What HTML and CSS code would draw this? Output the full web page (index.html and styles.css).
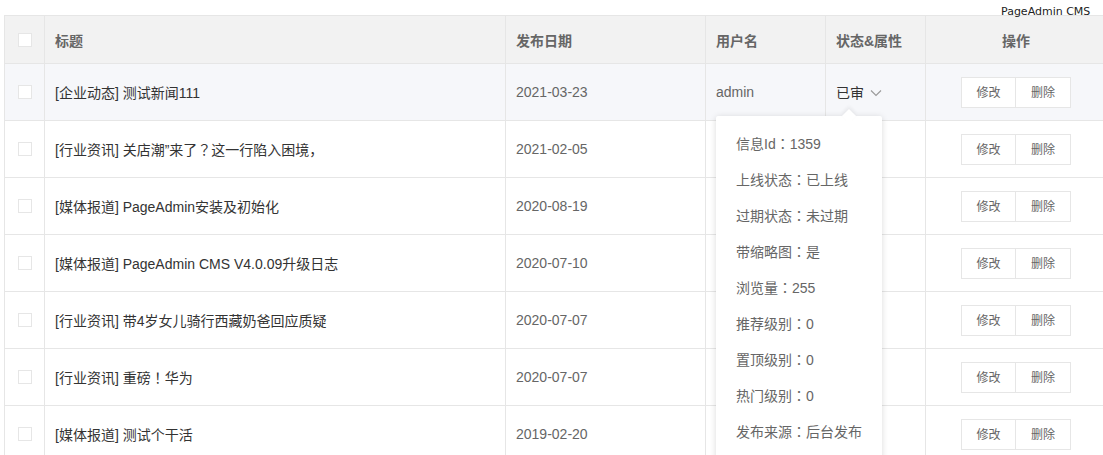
FILE: index.html
```html
<!DOCTYPE html>
<html lang="zh-CN">
<head>
  <meta charset="UTF-8">
  <title>信息列表</title>
  <link rel="stylesheet" href="styles.css">
</head>
<body>

  <div class="brand">PageAdmin CMS</div>

  <!-- 信息列表 -->
  <table class="list">
    <colgroup>
      <col class="c-check">
      <col class="c-title">
      <col class="c-date">
      <col class="c-user">
      <col class="c-state">
      <col class="c-ops">
    </colgroup>
    <thead>
      <tr>
        <th><span class="checkbox"></span></th>
        <th>标题</th>
        <th>发布日期</th>
        <th>用户名</th>
        <th>状态&amp;属性</th>
        <th class="center">操作</th>
      </tr>
    </thead>
    <tbody>
      <tr class="hover">
        <td><span class="checkbox"></span></td>
        <td class="title">[企业动态] 测试新闻111</td>
        <td>2021-03-23</td>
        <td>admin</td>
        <td class="state">
          <div class="state-wrap">
            已审
            <svg class="chevron" width="12" height="8" viewBox="0 0 12 8"><path d="M1 1.5 L6 6.5 L11 1.5" fill="none" stroke="#999" stroke-width="1.1"/></svg>
            <div class="popup">
              <div class="item">信息Id：1359</div>
              <div class="item">上线状态：已上线</div>
              <div class="item">过期状态：未过期</div>
              <div class="item">带缩略图：是</div>
              <div class="item">浏览量：255</div>
              <div class="item">推荐级别：0</div>
              <div class="item">置顶级别：0</div>
              <div class="item">热门级别：0</div>
              <div class="item">发布来源：后台发布</div>
            </div>
          </div>
        </td>
        <td class="center"><div class="btns"><span>修改</span><span>删除</span></div></td>
      </tr>
      <tr>
        <td><span class="checkbox"></span></td>
        <td class="title">[行业资讯] 关店潮”来了<span class="punc">？</span>这一行陷入困境，</td>
        <td>2021-02-05</td>
        <td></td>
        <td></td>
        <td class="center"><div class="btns"><span>修改</span><span>删除</span></div></td>
      </tr>
      <tr>
        <td><span class="checkbox"></span></td>
        <td class="title">[媒体报道] PageAdmin安装及初始化</td>
        <td>2020-08-19</td>
        <td></td>
        <td></td>
        <td class="center"><div class="btns"><span>修改</span><span>删除</span></div></td>
      </tr>
      <tr>
        <td><span class="checkbox"></span></td>
        <td class="title">[媒体报道] PageAdmin CMS V4.0.09升级日志</td>
        <td>2020-07-10</td>
        <td></td>
        <td></td>
        <td class="center"><div class="btns"><span>修改</span><span>删除</span></div></td>
      </tr>
      <tr>
        <td><span class="checkbox"></span></td>
        <td class="title">[行业资讯] 带4岁女儿骑行西藏奶爸回应质疑</td>
        <td>2020-07-07</td>
        <td></td>
        <td></td>
        <td class="center"><div class="btns"><span>修改</span><span>删除</span></div></td>
      </tr>
      <tr>
        <td><span class="checkbox"></span></td>
        <td class="title">[行业资讯] 重磅<span class="punc">！</span>华为</td>
        <td>2020-07-07</td>
        <td></td>
        <td></td>
        <td class="center"><div class="btns"><span>修改</span><span>删除</span></div></td>
      </tr>
      <tr>
        <td><span class="checkbox"></span></td>
        <td class="title">[媒体报道] 测试个干活</td>
        <td>2019-02-20</td>
        <td></td>
        <td></td>
        <td class="center"><div class="btns"><span>修改</span><span>删除</span></div></td>
      </tr>
    </tbody>
  </table>

</body>
</html>
```

FILE: styles.css
```css
html, body {
  margin: 0;
  overflow: hidden;
}

body {
  background: #fff;
  color: #333;
  font-family: "Liberation Sans", "Noto Sans CJK TC", sans-serif;
  font-size: 14px;
  padding: 15px 0 0 4px;
  position: relative;
}

.brand {
  position: absolute;
  top: 5px;
  left: 1001px;
  font-family: "DejaVu Sans", sans-serif;
  font-size: 11px;
  color: #222;
  z-index: 3;
}

.list {
  border-collapse: collapse;
  table-layout: fixed;
  width: 1102px;
}

.c-check { width: 40px; }
.c-title { width: 461px; }
.c-date { width: 200px; }
.c-user { width: 120px; }
.c-state { width: 100px; }
.c-ops { width: 181px; }

.list th,
.list td {
  border: 1px solid #e6e6e6;
  padding: 0 10px;
  text-align: left;
  white-space: nowrap;
}

.list th {
  height: 47px;
  background: #f2f2f2;
  color: #666;
  font-weight: bold;
}

.list td {
  height: 56px;
  color: #666;
}

.list td.title,
.list td.state {
  color: #333;
}

/* 全角标点居中 */
.punc,
.popup {
  font-feature-settings: "locl" 0;
}

.list th.center,
.list td.center {
  text-align: center;
}

.list tr.hover td {
  background: #f6f7fa;
}

.checkbox {
  display: block;
  width: 14px;
  height: 14px;
  margin: 0 auto;
  background: #fff;
  border: 1px solid #e6e6e6;
  box-sizing: border-box;
}

.state-wrap {
  position: relative;
  display: flex;
  align-items: center;
  gap: 6px;
}

.chevron {
  margin-top: 1px;
}

.popup {
  position: absolute;
  top: 34px;
  left: -120px;
  width: 146px;
  padding: 10px 0 12px 20px;
  background: #fff;
  border-radius: 2px;
  box-shadow: 0 1px 6px rgba(0, 0, 0, 0.15);
  z-index: 2;
}

.popup::before {
  content: "";
  position: absolute;
  top: -5px;
  left: 128px;
  width: 10px;
  height: 10px;
  background: #fff;
  transform: rotate(45deg);
  box-shadow: -2px -2px 4px rgba(0, 0, 0, 0.06);
}

.popup .item {
  height: 36px;
  line-height: 36px;
  color: #666;
  position: relative;
}

.btns {
  display: inline-flex;
}

.btns span {
  width: 55px;
  height: 31px;
  line-height: 31px;
  font-size: 12px;
  color: #666;
  text-align: center;
  border: 1px solid #e6e6e6;
  box-sizing: border-box;
  background: #fff;
}

.btns span + span {
  border-left: none;
}
```
